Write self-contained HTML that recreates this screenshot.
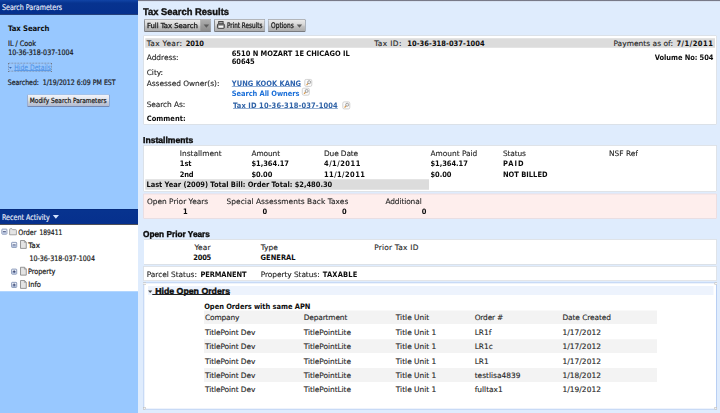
<!DOCTYPE html>
<html lang="en"><head><meta charset="utf-8"><title>Tax Search Results</title>
<style>
*{margin:0;padding:0;box-sizing:border-box}
html,body{width:720px;height:413px;overflow:hidden;background:#dfecfd}
#pg{position:absolute;left:0;top:0;width:2880px;height:1652px;transform:scale(.25);transform-origin:0 0;line-height:1;overflow:hidden;text-rendering:geometricPrecision}
.a{position:absolute;white-space:pre}
.r{font-family:"DejaVu Sans","Liberation Sans",sans-serif;color:#262626;-webkit-text-stroke:.5px}
.b{font-family:"DejaVu Sans Condensed","DejaVu Sans","Liberation Sans",sans-serif;font-weight:bold;color:#0c0c0c}
.l{font-family:"DejaVu Sans Condensed","DejaVu Sans","Liberation Sans",sans-serif;color:#1a1a1a;-webkit-text-stroke:.8px}
.h{font-family:"Liberation Sans","DejaVu Sans",sans-serif;font-weight:bold;color:#101010}
b{font-family:"DejaVu Sans Condensed","DejaVu Sans","Liberation Sans",sans-serif;font-weight:bold;color:#0c0c0c}
svg{position:absolute;overflow:visible}
</style></head>
<body><div id="pg">
<div class="a" style="left:0px;top:0px;width:552px;height:1652px;background:#98c8ff;"></div>
<div class="a" style="left:0px;top:0px;width:552px;height:59.2px;background:#00154f;"></div>
<div class="a" style="left:0px;top:0px;width:552px;height:56.4px;background:linear-gradient(#1144a6,#07338f 22%,#06308d);"></div>
<div class="a l" style="top:13.87px;font-size:31.6px;left:7.6px;color:#f0f4fe;transform:scaleX(0.8932);transform-origin:0 0;-webkit-text-stroke:.5px #f0f4fe;">Search Parameters</div>
<div class="a b" style="top:98.54px;font-size:30.8px;left:32.4px;letter-spacing:-0.359px;">Tax Search</div>
<div class="a l" style="top:159.22px;font-size:30px;left:32px;transform:scaleX(0.9596);transform-origin:0 0;">IL / Cook</div>
<div class="a l" style="top:195.22px;font-size:30px;left:33.2px;transform:scaleX(0.9337);transform-origin:0 0;">10-36-318-037-1004</div>
<div class="a" style="left:32px;top:250.8px;width:174.8px;height:34.8px;background:#98c6fc;border:3px dotted #6f7684;"></div>
<svg style="left:35.6px;top:266.8px" width="11.6" height="8.8" viewBox="0 0 10 6"><path d="M0 0H10L5 6Z" fill="#3568b8"/></svg>
<div class="a l" style="top:255.22px;font-size:30px;left:57.2px;color:#4a8fe6;transform:scaleX(0.8967);transform-origin:0 0;text-decoration:underline;-webkit-text-stroke:0;">Hide Details</div>
<div class="a l" style="top:315.22px;font-size:30px;left:31.2px;transform:scaleX(0.9209);transform-origin:0 0;">Searched:</div>
<div class="a l" style="top:315.22px;font-size:30px;left:171.2px;transform:scaleX(0.9259);transform-origin:0 0;">1/19/2012 6:09 PM EST</div>
<div class="a" style="left:108.4px;top:376.8px;width:330.4px;height:50.8px;border:3px solid #8a93ab;border-color:#b4bccf #6f7fa8 #64749f #9aa5c0;border-radius:5px;background:linear-gradient(#f1f3f8,#dfe2ea 45%,#c9cedb 60%,#b3bbcf);"></div>
<div class="a l" style="top:388.57px;font-size:28.4px;left:118.8px;color:#151515;transform:scaleX(0.9171);transform-origin:0 0;">Modify Search Parameters</div>
<div class="a" style="left:0px;top:835.6px;width:552px;height:64px;background:#17171f;"></div>
<div class="a" style="left:0px;top:835.6px;width:552px;height:60.4px;background:linear-gradient(#042877,#07338f 10%,#06308d);"></div>
<div class="a l" style="top:853.87px;font-size:31.6px;left:7.6px;color:#f0f4fe;transform:scaleX(0.8962);transform-origin:0 0;-webkit-text-stroke:.5px #f0f4fe;">Recent Activity</div>
<svg style="left:211.2px;top:860px" width="25.2" height="14.8" viewBox="0 0 10 6"><path d="M0 0H10L5 6Z" fill="#d2e2fc"/></svg>
<div class="a" style="left:0px;top:899.2px;width:552px;height:265.6px;background:#fff;"></div>
<svg style="left:6px;top:915.2px" width="23.2" height="23.2" viewBox="0 0 10 10"><rect x=".6" y=".6" width="8.8" height="8.8" rx="1.2" fill="#eef2f9" stroke="#6b7ea6" stroke-width="1.3"/><rect x="1.3" y="5.8" width="7.4" height="2.9" fill="#b3c1dc"/><path d="M2.4 5H7.6" stroke="#1c2b5c" stroke-width="1.3"/></svg>
<svg style="left:36.4px;top:912.8px" width="32.0" height="28.0" viewBox="0 0 10 9"><path d="M.6 8.4V1.6Q.6 .6 1.6 .6H3.6L4.6 1.8H8.4Q9.4 1.8 9.4 2.8V8.4Z" fill="#e4e4e4" stroke="#909090" stroke-width="1"/></svg>
<div class="a l" style="top:915.22px;font-size:30px;left:72.8px;transform:scaleX(0.9447);transform-origin:0 0;">Order</div>
<div class="a l" style="top:915.22px;font-size:30px;left:158.4px;transform:scaleX(0.8814);transform-origin:0 0;">189411</div>
<svg style="left:45.2px;top:968px" width="23.2" height="23.2" viewBox="0 0 10 10"><rect x=".6" y=".6" width="8.8" height="8.8" rx="1.2" fill="#eef2f9" stroke="#6b7ea6" stroke-width="1.3"/><rect x="1.3" y="5.8" width="7.4" height="2.9" fill="#b3c1dc"/><path d="M2.4 5H7.6" stroke="#1c2b5c" stroke-width="1.3"/></svg>
<svg style="left:79.6px;top:960px" width="27.2" height="35.6" viewBox="0 0 8 10.5"><path d="M.6 .6H5.4L7.4 2.6V9.9H.6Z" fill="#e4e4e4" stroke="#858585" stroke-width="1"/><path d="M5.2 .8V2.8H7.2" fill="none" stroke="#8c8c8c" stroke-width=".8"/></svg>
<div class="a l" style="top:967.22px;font-size:30px;left:113.2px;transform:scaleX(1.0629);transform-origin:0 0;">Tax</div>
<div class="a l" style="top:1019.22px;font-size:30px;left:118.4px;transform:scaleX(0.9365);transform-origin:0 0;">10-36-318-037-1004</div>
<svg style="left:45.2px;top:1075.2px" width="23.2" height="23.2" viewBox="0 0 10 10"><rect x=".6" y=".6" width="8.8" height="8.8" rx="1.2" fill="#eef2f9" stroke="#6b7ea6" stroke-width="1.3"/><rect x="1.3" y="5.8" width="7.4" height="2.9" fill="#b3c1dc"/><path d="M2.4 5H7.6" stroke="#1c2b5c" stroke-width="1.3"/><path d="M5 2.4V7.6" stroke="#1c2b5c" stroke-width="1.3"/></svg>
<svg style="left:79.6px;top:1067.2px" width="27.2" height="35.6" viewBox="0 0 8 10.5"><path d="M.6 .6H5.4L7.4 2.6V9.9H.6Z" fill="#e4e4e4" stroke="#858585" stroke-width="1"/><path d="M5.2 .8V2.8H7.2" fill="none" stroke="#8c8c8c" stroke-width=".8"/></svg>
<div class="a l" style="top:1071.22px;font-size:30px;left:112px;transform:scaleX(0.9607);transform-origin:0 0;">Property</div>
<svg style="left:45.2px;top:1127.6px" width="23.2" height="23.2" viewBox="0 0 10 10"><rect x=".6" y=".6" width="8.8" height="8.8" rx="1.2" fill="#eef2f9" stroke="#6b7ea6" stroke-width="1.3"/><rect x="1.3" y="5.8" width="7.4" height="2.9" fill="#b3c1dc"/><path d="M2.4 5H7.6" stroke="#1c2b5c" stroke-width="1.3"/><path d="M5 2.4V7.6" stroke="#1c2b5c" stroke-width="1.3"/></svg>
<svg style="left:79.6px;top:1119.6px" width="27.2" height="35.6" viewBox="0 0 8 10.5"><path d="M.6 .6H5.4L7.4 2.6V9.9H.6Z" fill="#e4e4e4" stroke="#858585" stroke-width="1"/><path d="M5.2 .8V2.8H7.2" fill="none" stroke="#8c8c8c" stroke-width=".8"/></svg>
<div class="a l" style="top:1123.22px;font-size:30px;left:113.2px;transform:scaleX(0.9867);transform-origin:0 0;">Info</div>
<div class="a" style="left:552px;top:0px;width:2328px;height:6.4px;background:linear-gradient(#5e5e6a,#8e90a0 60%,#cfd6e6);"></div>
<div class="a h" style="top:27.78px;font-size:38.8px;left:572.4px;transform:scaleX(0.9688);transform-origin:0 0;-webkit-text-stroke:1.6px #101010;">Tax Search Results</div>
<div class="a" style="left:576px;top:76px;width:268.8px;height:51.6px;border:3px solid #8c8c8c;border-color:#a4a4a4 #666 #5a5a5a #6c6c6c;border-radius:5px;background:linear-gradient(#eaeaea,#d6d6d6 45%,#c0c0c0 60%,#adadad);"></div>
<div class="a" style="left:802.4px;top:78.4px;width:40px;height:46.8px;background:linear-gradient(#b0b0b0,#9c9c9c 50%,#8e8e8e);border-left:2px solid #888;"></div>
<div class="a r" style="top:89.25px;font-size:27.6px;left:587.6px;color:#1a1a1a;letter-spacing:-0.111px;-webkit-text-stroke:1.2px #1a1a1a;">Full Tax Search</div>
<svg style="left:813.6px;top:97.6px" width="23.2" height="13.2" viewBox="0 0 10 6"><path d="M0 0H10L5 6Z" fill="#5c5c5c"/></svg>
<div class="a" style="left:856.4px;top:76px;width:204.4px;height:51.6px;border:3px solid #8c8c8c;border-color:#a4a4a4 #666 #5a5a5a #6c6c6c;border-radius:5px;background:linear-gradient(#eaeaea,#d6d6d6 45%,#c0c0c0 60%,#adadad);"></div>
<svg style="left:867.6px;top:84.4px" width="31.2" height="31.2" viewBox="0 0 7.8 7.8"><rect x="1.7" y=".5" width="4.4" height="2.6" fill="#a8a8a8" stroke="#484848" stroke-width="1"/><rect x=".5" y="3" width="6.8" height="4.3" rx=".6" fill="#8c8c8c" stroke="#454545" stroke-width="1"/><rect x="1.5" y="4.7" width="4.8" height="2" fill="#fafafa"/></svg>
<div class="a l" style="top:86.54px;font-size:30.8px;left:907.6px;color:#111;transform:scaleX(0.8202);transform-origin:0 0;-webkit-text-stroke:.9px #111;">Print Results</div>
<div class="a" style="left:1071.2px;top:76px;width:152px;height:51.6px;border:3px solid #8c8c8c;border-color:#a4a4a4 #666 #5a5a5a #6c6c6c;border-radius:5px;background:linear-gradient(#eaeaea,#d6d6d6 45%,#c0c0c0 60%,#adadad);"></div>
<div class="a l" style="top:86.54px;font-size:30.8px;left:1084px;color:#111;transform:scaleX(0.8512);transform-origin:0 0;-webkit-text-stroke:.9px #111;">Options</div>
<svg style="left:1185.6px;top:97.6px" width="23.6" height="13.2" viewBox="0 0 10 6"><path d="M0 0H10L5 6Z" fill="#5c5c5c"/></svg>
<div class="a" style="left:574px;top:142.4px;width:2292.8px;height:356px;background:#fff;border:2px solid #c8cbd1;"></div>
<div class="a" style="left:580.8px;top:152.8px;width:2279.2px;height:38px;background:#dcdcdc;"></div>
<div class="a r" style="top:159.46px;font-size:29.72px;left:586.8px;letter-spacing:1.279px;">Tax Year:</div>
<div class="a b" style="top:159.39px;font-size:29.8px;left:742.8px;letter-spacing:-0.652px;">2010</div>
<div class="a r" style="top:159.46px;font-size:29.72px;left:1496.8px;letter-spacing:1.463px;">Tax ID:</div>
<div class="a b" style="top:159.39px;font-size:29.8px;left:1629.2px;letter-spacing:0.241px;">10-36-318-037-1004</div>
<div class="a r" style="top:159.46px;font-size:29.72px;left:2453.6px;letter-spacing:0.175px;">Payments as of:</div>
<div class="a b" style="top:159.39px;font-size:29.8px;left:2705.6px;letter-spacing:2.062px;">7/1/2011</div>
<div class="a b" style="top:215.39px;font-size:29.8px;left:2619.2px;letter-spacing:-0.266px;">Volume No: 504</div>
<div class="a r" style="top:215.46px;font-size:29.72px;left:586.8px;letter-spacing:-0.097px;">Address:</div>
<div class="a b" style="top:199.39px;font-size:29.8px;left:926.8px;letter-spacing:-0.008px;">6510 N MOZART 1E CHICAGO IL</div>
<div class="a b" style="top:231.39px;font-size:29.8px;left:926.8px;letter-spacing:-0.253px;">60645</div>
<div class="a r" style="top:275.46px;font-size:29.72px;left:586.8px;letter-spacing:-0.102px;">City:</div>
<div class="a r" style="top:319.46px;font-size:29.72px;left:586.8px;letter-spacing:-0.115px;">Assessed Owner(s):</div>
<div class="a b" style="top:319.39px;font-size:29.8px;left:927.2px;color:#2d63ae;letter-spacing:0.086px;text-decoration:underline;">YUNG KOOK KANG</div>
<svg style="left:1216.4px;top:316.4px" width="34.4" height="31.2" viewBox="0 0 16 16"><rect x=".8" y=".8" width="14.4" height="14.4" rx="3" fill="#fcfcfc" stroke="#c9c9c9" stroke-width="1.7"/><path d="M7.6 9L5 11.8" stroke="#dc9a4a" stroke-width="2.4" stroke-linecap="round"/><circle cx="9.8" cy="6.6" r="3.1" fill="#f1f1f1" stroke="#929292" stroke-width="1.7"/></svg>
<div class="a b" style="top:359.39px;font-size:29.8px;left:927.2px;color:#1b6fd8;letter-spacing:-0.304px;">Search All Owners</div>
<svg style="left:1206.8px;top:351.2px" width="32.4" height="31.2" viewBox="0 0 16 16"><rect x=".8" y=".8" width="14.4" height="14.4" rx="3" fill="#fcfcfc" stroke="#c9c9c9" stroke-width="1.7"/><path d="M7.6 9L5 11.8" stroke="#dc9a4a" stroke-width="2.4" stroke-linecap="round"/><circle cx="9.8" cy="6.6" r="3.1" fill="#f1f1f1" stroke="#929292" stroke-width="1.7"/></svg>
<div class="a r" style="top:403.46px;font-size:29.72px;left:586.8px;letter-spacing:-0.338px;">Search As:</div>
<div class="a b" style="top:407.39px;font-size:29.8px;left:932px;color:#2f62a6;letter-spacing:0.530px;text-decoration:underline;">Tax ID 10-36-318-037-1004</div>
<svg style="left:1368.8px;top:406.4px" width="32.4" height="31.2" viewBox="0 0 16 16"><rect x=".8" y=".8" width="14.4" height="14.4" rx="3" fill="#fcfcfc" stroke="#c9c9c9" stroke-width="1.7"/><path d="M7.6 9L5 11.8" stroke="#dc9a4a" stroke-width="2.4" stroke-linecap="round"/><circle cx="9.8" cy="6.6" r="3.1" fill="#f1f1f1" stroke="#929292" stroke-width="1.7"/></svg>
<div class="a b" style="top:459.39px;font-size:29.8px;left:586.8px;letter-spacing:0.152px;">Comment:</div>
<div class="a h" style="top:543.5px;font-size:34.4px;left:572px;transform:scaleX(1.0006);transform-origin:0 0;-webkit-text-stroke:1.5px #0a0a0a;color:#0a0a0a;">Installments</div>
<div class="a" style="left:574px;top:581.2px;width:2292.8px;height:186px;background:#fff;border:2px solid #c8cbd1;"></div>
<div class="a" style="left:580.8px;top:717.2px;width:1135.2px;height:42px;background:#dcdcdc;"></div>
<div class="a r" style="top:599.46px;font-size:29.72px;left:719.2px;letter-spacing:0.001px;">Installment</div>
<div class="a r" style="top:599.46px;font-size:29.72px;left:1005.6px;letter-spacing:-0.399px;">Amount</div>
<div class="a r" style="top:599.46px;font-size:29.72px;left:1296px;letter-spacing:-0.561px;">Due Date</div>
<div class="a r" style="top:599.46px;font-size:29.72px;left:1722px;letter-spacing:-0.087px;">Amount Paid</div>
<div class="a r" style="top:599.46px;font-size:29.72px;left:2011.6px;letter-spacing:-0.584px;">Status</div>
<div class="a r" style="top:599.46px;font-size:29.72px;left:2436.4px;letter-spacing:-0.129px;">NSF Ref</div>
<div class="a b" style="top:639.39px;font-size:29.8px;left:719.2px;letter-spacing:-0.213px;">1st</div>
<div class="a b" style="top:639.39px;font-size:29.8px;left:1005.6px;letter-spacing:-0.060px;">$1,364.17</div>
<div class="a b" style="top:639.39px;font-size:29.8px;left:1296px;letter-spacing:1.963px;">4/1/2011</div>
<div class="a b" style="top:639.39px;font-size:29.8px;left:1722px;letter-spacing:-0.193px;">$1,364.17</div>
<div class="a b" style="top:639.39px;font-size:29.8px;left:2011.6px;letter-spacing:4.227px;">PAID</div>
<div class="a b" style="top:683.39px;font-size:29.8px;left:719.2px;letter-spacing:-1.113px;">2nd</div>
<div class="a b" style="top:683.39px;font-size:29.8px;left:1005.6px;letter-spacing:-0.239px;">$0.00</div>
<div class="a b" style="top:683.39px;font-size:29.8px;left:1296px;letter-spacing:1.672px;">11/1/2011</div>
<div class="a b" style="top:683.39px;font-size:29.8px;left:1722px;letter-spacing:-0.239px;">$0.00</div>
<div class="a b" style="top:683.39px;font-size:29.8px;left:2011.6px;letter-spacing:0.083px;">NOT BILLED</div>
<div class="a b" style="top:723.39px;font-size:29.8px;left:585.6px;letter-spacing:-0.077px;">Last Year (2009) Total Bill: Order Total: $2,480.30</div>
<div class="a" style="left:574px;top:775.2px;width:2292.8px;height:99.2px;background:#feeeed;border:2px solid #e3d0d2;"></div>
<div class="a r" style="top:791.46px;font-size:29.72px;left:587.6px;letter-spacing:0.015px;">Open Prior Years</div>
<div class="a r" style="top:791.46px;font-size:29.72px;left:906.4px;letter-spacing:0.119px;">Special Assessments Back Taxes</div>
<div class="a r" style="top:791.46px;font-size:29.72px;left:1541.6px;letter-spacing:-0.440px;">Additional</div>
<div class="a b" style="top:831.39px;font-size:29.8px;left:732px;">1</div>
<div class="a b" style="top:831.39px;font-size:29.8px;left:1050.4px;">0</div>
<div class="a b" style="top:831.39px;font-size:29.8px;left:1368px;">0</div>
<div class="a b" style="top:831.39px;font-size:29.8px;left:1686.8px;">0</div>
<div class="a h" style="top:919.5px;font-size:34.4px;left:572px;transform:scaleX(0.9610);transform-origin:0 0;-webkit-text-stroke:1.5px #0a0a0a;color:#0a0a0a;">Open Prior Years</div>
<div class="a" style="left:574px;top:956.8px;width:2292.8px;height:100.8px;background:#fff;border:2px solid #c8cbd1;"></div>
<div class="a r" style="top:975.46px;font-size:29.72px;left:777.6px;letter-spacing:0.570px;">Year</div>
<div class="a b" style="top:1015.39px;font-size:29.8px;left:772.8px;letter-spacing:-0.752px;">2005</div>
<div class="a r" style="top:975.46px;font-size:29.72px;left:1042.8px;">Type</div>
<div class="a b" style="top:1015.39px;font-size:29.8px;left:1042px;letter-spacing:0.122px;">GENERAL</div>
<div class="a r" style="top:975.46px;font-size:29.72px;left:1496.8px;letter-spacing:0.812px;">Prior Tax ID</div>
<div class="a" style="left:574px;top:1065.2px;width:2292.8px;height:58.4px;background:#fff;border:2px solid #c8cbd1;"></div>
<div class="a r" style="top:1083.46px;font-size:29.72px;left:586.8px;letter-spacing:-0.186px;">Parcel Status:</div>
<div class="a b" style="top:1083.39px;font-size:29.8px;left:801.6px;letter-spacing:-0.391px;">PERMANENT</div>
<div class="a r" style="top:1083.46px;font-size:29.72px;left:1042.8px;letter-spacing:-0.270px;">Property Status:</div>
<div class="a b" style="top:1083.39px;font-size:29.8px;left:1290.8px;letter-spacing:0.802px;">TAXABLE</div>
<div class="a" style="left:573.2px;top:1128.8px;width:2294.8px;height:510px;background:#fff;border:4px solid #b9cff3;"></div>
<div class="a" style="left:573.2px;top:1129.6px;width:10.4px;height:9.6px;background:#f4f4f4;border:2px solid #b8b8b8;"></div>
<div class="a" style="left:2858.4px;top:1627.6px;width:9.6px;height:10px;background:#f4f4f4;border:2px solid #b8b8b8;"></div>
<div class="a" style="left:573.2px;top:1628px;width:9.6px;height:10px;background:#f4f4f4;border:2px solid #b8b8b8;"></div>
<div class="a" style="left:2858.4px;top:1129.6px;width:9.6px;height:9.6px;background:#f4f4f4;border:2px solid #b8b8b8;"></div>
<div class="a" style="left:592px;top:1144px;width:2261.6px;height:36.4px;background:#edf3fd;"></div>
<svg style="left:592.4px;top:1162px" width="17.6" height="10.0" viewBox="0 0 10 6"><path d="M0 0H10L5 6Z" fill="#484848"/></svg>
<div class="a h" style="top:1147.5px;font-size:34.4px;left:620.8px;transform:scaleX(1.0166);transform-origin:0 0;-webkit-text-stroke:1.5px #0a0a0a;color:#0a0a0a;">Hide Open Orders</div>
<div class="a" style="left:608.8px;top:1176.4px;width:311.2px;height:3.2px;background:#222;"></div>
<div class="a b" style="top:1211.39px;font-size:29.8px;left:816.8px;letter-spacing:-0.127px;">Open Orders with same APN</div>
<div class="a" style="left:815.6px;top:1241.6px;width:1812px;height:54.4px;background:#f3f3f3;"></div>
<div class="a" style="left:815.6px;top:1357.2px;width:1812px;height:54.8px;background:#f3f3f3;"></div>
<div class="a" style="left:815.6px;top:1472px;width:1812px;height:56.4px;background:#f3f3f3;"></div>
<div class="a r" style="top:1255.46px;font-size:29.72px;left:820px;letter-spacing:-0.599px;">Company</div>
<div class="a r" style="top:1255.46px;font-size:29.72px;left:1214.8px;letter-spacing:-0.584px;">Department</div>
<div class="a r" style="top:1255.46px;font-size:29.72px;left:1583.2px;">Title Unit</div>
<div class="a r" style="top:1255.46px;font-size:29.72px;left:1898.8px;letter-spacing:-0.745px;">Order #</div>
<div class="a r" style="top:1255.46px;font-size:29.72px;left:2249.6px;letter-spacing:-0.308px;">Date Created</div>
<div class="a r" style="top:1315.46px;font-size:29.72px;left:820px;letter-spacing:-0.349px;">TitlePoint Dev</div>
<div class="a r" style="top:1315.46px;font-size:29.72px;left:1214.8px;letter-spacing:-0.217px;">TitlePointLite</div>
<div class="a r" style="top:1315.46px;font-size:29.72px;left:1583.2px;">Title Unit 1</div>
<div class="a r" style="top:1315.46px;font-size:29.72px;left:1898.8px;">LR1f</div>
<div class="a r" style="top:1315.46px;font-size:29.72px;left:2249.6px;letter-spacing:0.223px;">1/17/2012</div>
<div class="a r" style="top:1371.46px;font-size:29.72px;left:820px;letter-spacing:-0.349px;">TitlePoint Dev</div>
<div class="a r" style="top:1371.46px;font-size:29.72px;left:1214.8px;letter-spacing:-0.217px;">TitlePointLite</div>
<div class="a r" style="top:1371.46px;font-size:29.72px;left:1583.2px;">Title Unit 1</div>
<div class="a r" style="top:1371.46px;font-size:29.72px;left:1898.8px;">LR1c</div>
<div class="a r" style="top:1371.46px;font-size:29.72px;left:2249.6px;letter-spacing:0.223px;">1/17/2012</div>
<div class="a r" style="top:1431.46px;font-size:29.72px;left:820px;letter-spacing:-0.349px;">TitlePoint Dev</div>
<div class="a r" style="top:1431.46px;font-size:29.72px;left:1214.8px;letter-spacing:-0.217px;">TitlePointLite</div>
<div class="a r" style="top:1431.46px;font-size:29.72px;left:1583.2px;">Title Unit 1</div>
<div class="a r" style="top:1431.46px;font-size:29.72px;left:1898.8px;">LR1</div>
<div class="a r" style="top:1431.46px;font-size:29.72px;left:2249.6px;letter-spacing:0.223px;">1/17/2012</div>
<div class="a r" style="top:1487.46px;font-size:29.72px;left:820px;letter-spacing:-0.349px;">TitlePoint Dev</div>
<div class="a r" style="top:1487.46px;font-size:29.72px;left:1214.8px;letter-spacing:-0.217px;">TitlePointLite</div>
<div class="a r" style="top:1487.46px;font-size:29.72px;left:1583.2px;">Title Unit 1</div>
<div class="a r" style="top:1487.46px;font-size:29.72px;left:1898.8px;">testlisa4839</div>
<div class="a r" style="top:1487.46px;font-size:29.72px;left:2249.6px;letter-spacing:0.223px;">1/18/2012</div>
<div class="a r" style="top:1543.46px;font-size:29.72px;left:820px;letter-spacing:-0.349px;">TitlePoint Dev</div>
<div class="a r" style="top:1543.46px;font-size:29.72px;left:1214.8px;letter-spacing:-0.217px;">TitlePointLite</div>
<div class="a r" style="top:1543.46px;font-size:29.72px;left:1583.2px;">Title Unit 1</div>
<div class="a r" style="top:1543.46px;font-size:29.72px;left:1898.8px;">fulltax1</div>
<div class="a r" style="top:1543.46px;font-size:29.72px;left:2249.6px;letter-spacing:0.223px;">1/19/2012</div>
</div></body></html>
